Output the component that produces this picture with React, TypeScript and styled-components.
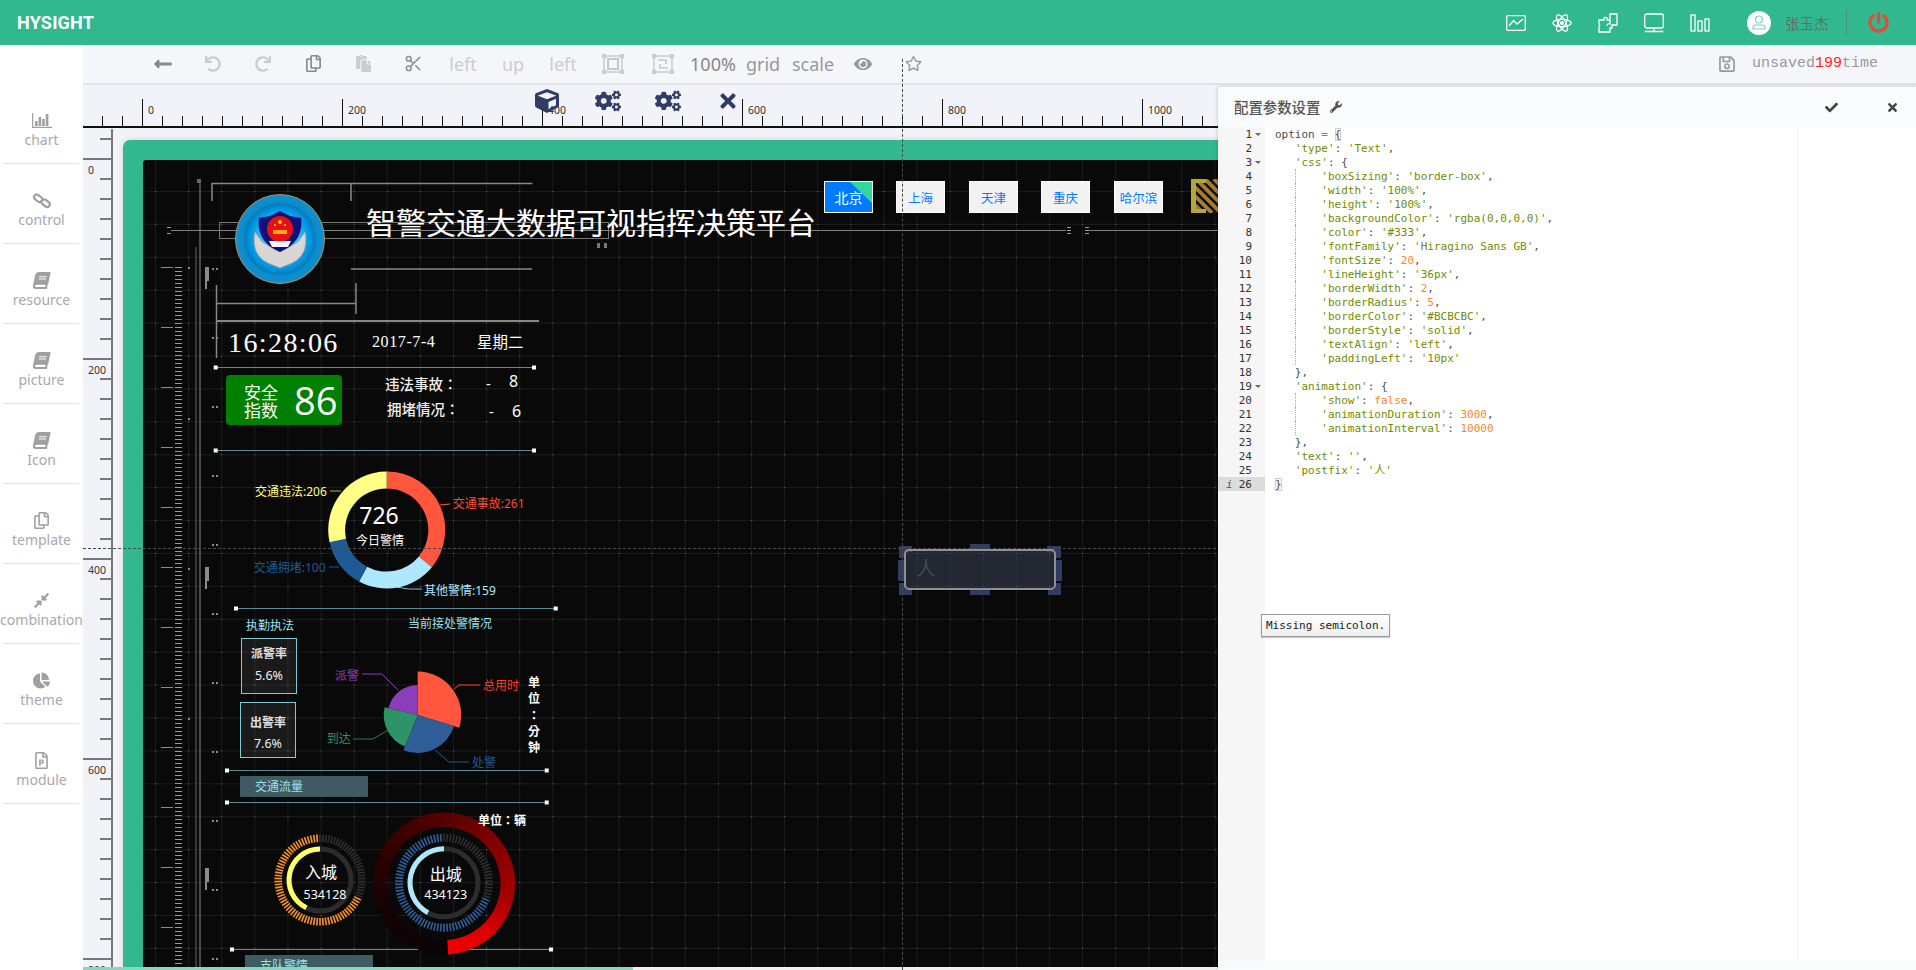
import React from 'react';
import styled, { createGlobalStyle } from 'styled-components';
import {
  FaLongArrowAltLeft, FaUndo, FaRedo, FaRegCopy, FaPaste, FaEye, FaRegStar, FaRegSave, FaCube, FaCogs,
  FaTimes, FaWrench, FaCheck, FaBook, FaCompressAlt, FaChartPie, FaRegFilePowerpoint, FaPowerOff,
} from 'react-icons/fa';
import { Scissors } from 'lucide-react';

const CJK = `"Noto Sans", "Noto Sans CJK SC", sans-serif`;
const TC = `"Noto Sans", "Noto Sans CJK TC", sans-serif`;
const MONO = `"DejaVu Sans Mono", "Noto Sans CJK SC", monospace`;
const GREEN = '#32b88f';

const Global = createGlobalStyle`
  html, body { margin: 0; padding: 0; height: 100%; overflow: hidden; background: #fff; }
  #root { height: 100%; }
  * { box-sizing: border-box; }
`;

const Page = styled.div`
  position: relative; width: 100vw; height: 100vh; overflow: hidden;
  display: grid; grid-template-rows: 45px 1fr; font-family: ${CJK};
`;

/* ---------- header ---------- */
const Header = styled.header`
  background: ${GREEN}; display: flex; align-items: center; padding-left: 17px; color: #fff;
`;
const Brand = styled.div`
  font-family: Roboto, sans-serif; font-weight: 700; font-size: 18px; letter-spacing: 0.2px; flex: 1;
`;
const HeadIcons = styled.div`display: flex; align-items: center; gap: 26px; margin-right: 37px;`;
const HeadIcon = styled.svg`width: 20px; height: 20px; display: block; fill: none; stroke: #fff; stroke-width: 1.3;`;
const User = styled.div`display: flex; align-items: center; width: 99px; gap: 14px; height: 25px;`;
const Avatar = styled.div`
  width: 24px; height: 24px; border-radius: 50%; background: #fff; display: flex; align-items: center; justify-content: center; flex: none;
`;
const UserName = styled.span`font-size: 14.5px; color: #5f6f6a; white-space: nowrap; font-weight: 400;`;
const PowerCell = styled.div`
  height: 25px; width: 70px; border-left: 1px solid rgba(120,90,90,.45); display: flex; align-items: center; padding-left: 21px; color: #e8493a; font-size: 21px;
`;

/* ---------- sidebar ---------- */
const Body = styled.div`display: flex; min-height: 0;`;
const Sidebar = styled.aside`
  width: 83px; flex: none; background: #fff; padding-top: 39px; display: flex; flex-direction: column; align-items: center;
`;
const SideItem = styled.div`
  width: 75px; height: 80px; border-bottom: 1px solid #e2e2e2; flex: none; display: flex; flex-direction: column; align-items: center; padding-top: 27px; color: #a0a0a0;
`;
const SideIcon = styled.div`height: 19px; display: flex; align-items: center; justify-content: center; font-size: 17px;`;
const SideLabel = styled.div`font-size: 14px; line-height: 20px; color: #a9a9a9; white-space: nowrap;`;
const Tilted = styled.span`display: flex; transform: skewX(-12deg);`;

/* ---------- main ---------- */
const Main = styled.main`flex: 1; min-width: 0; display: flex; flex-direction: column; position: relative; background: #f2f3f8;`;
const Toolbar = styled.div`
  height: 40px; flex: none; background: #f5f6fa; border-bottom: 2px solid #dfe4ec; padding-left: 55px; display: flex; align-items: center; padding-bottom: 1px;
`;
const Tool = styled.div<{ $c?: string }>`
  width: 50px; display: flex; justify-content: center; align-items: center; flex: none;
  font-size: 18px; line-height: 24px; color: ${p => p.$c ?? '#999'}; white-space: nowrap;
`;
const SaveState = styled.div`
  margin-left: auto; display: flex; align-items: center; color: #999; font-family: "Liberation Mono", monospace; font-size: 15px; margin-right: 38px;
  svg { font-size: 18px; margin-right: 16px; }
`;
const Red = styled.span`color: #f22;`;
const RulerRow = styled.div`height: 43px; flex: none; position: relative;`;
const ToolOverlay = styled.div<{ $x: number; $size?: number }>`
  position: absolute; top: ${p => 15 - (p.$size ?? 24) / 2 + 1}px; left: ${p => p.$x - 83 - (p.$size ?? 24) / 2}px; color: #313c65; font-size: ${p => p.$size ?? 24}px; line-height: 0;
`;
const RulerSvg = styled.svg`display: block; position: absolute; left: 0; top: 0;
  text { font-family: "Noto Sans", sans-serif; font-size: 10.5px; fill: #333; }
`;
const Stage = styled.div`flex: 1; min-height: 0; display: flex; position: relative;`;
const VRuler = styled.div`width: 40px; flex: none; position: relative;`;
const FrameArea = styled.div`flex: 1; min-width: 0; padding-top: 12px;`;
const Frame = styled.div`
  height: 100%; background: ${GREEN}; padding: 20px 0 0 20px; border-radius: 7px 0 0 0; box-shadow: 0 0 6px rgba(0,0,0,.12);
`;
const Canvas = styled.div`
  position: relative; height: 100%; overflow: hidden; border-radius: 3px 0 0 0; background-color: #090909;
  background-image:
    radial-gradient(circle at 0.5px 0.5px, rgba(120,200,190,.4) 0.8px, transparent 1px),
    linear-gradient(to right, rgba(255,255,255,.07) 1px, transparent 1px),
    linear-gradient(to bottom, rgba(255,255,255,.07) 1px, transparent 1px);
  background-size: 33.12px 32.92px;
  background-position: 12px 31px;
`;
const Scene = styled.svg`position: absolute; left: 0; top: 0; display: block;`;
const HScroll = styled.div`
  position: absolute; left: 0; right: 0; bottom: 0; height: 3px; background: #efefef;
  &::before { content: ''; display: block; width: 550px; height: 3px; background: #83d9bb; }
`;
const GuideV = styled.div`position: absolute; left: 819px; top: 14px; bottom: 0; border-left: 1px dashed #4a4a4a;`;
const GuideH = styled.div`position: absolute; left: 0; right: 0; top: 503px; border-top: 1px dashed #4a4a4a;`;

/* ---------- canvas nodes ---------- */
const Txt = styled.span<{ $x: number; $y: number; $s?: number; $c?: string; $w?: number; $mid?: boolean; $f?: string; $ls?: number }>`
  position: absolute; left: ${p => p.$x - 143}px; top: ${p => p.$y - 160}px;
  transform: translate(${p => (p.$mid ? '-50%' : '0')}, -50%);
  font-size: ${p => p.$s ?? 12}px; color: ${p => p.$c ?? '#fff'}; font-weight: ${p => p.$w ?? 400};
  font-family: ${p => p.$f ?? CJK}; letter-spacing: ${p => p.$ls ?? 0}px; white-space: nowrap; line-height: 1.2;
`;
const ScoreBox = styled.div`
  position: absolute; left: 83px; top: 215px; width: 116px; height: 50px; background: #008000; border-radius: 4px;
  display: flex; align-items: center; padding-left: 18px; color: #fff;
`;
const ScoreLabel = styled.div`font-size: 17px; line-height: 18px; width: 50px; flex: none; margin-top: 3px;`;
const ScoreNum = styled.div`font-size: 38px; line-height: 50px; font-family: "Open Sans", sans-serif;`;
const Card = styled.div<{ $x: number; $y: number; $pad: number; $gap: number }>`
  position: absolute; left: ${p => p.$x - 143}px; top: ${p => p.$y - 160}px; width: 56px; height: 56px;
  border: 1px solid #7fc8d8; background: rgba(255,255,255,.07); color: #fff; display: flex; flex-direction: column; align-items: center;
  padding-top: ${p => p.$pad}px; gap: ${p => p.$gap}px;
`;
const CardTitle = styled.div`font-size: 12px; line-height: 16px; font-weight: 700; color: #e0e0e0;`;
const CardValue = styled.div`font-size: 12.5px; line-height: 16px; color: #eee;`;
const VerticalUnit = styled.div`
  position: absolute; left: 384px; top: 515px; width: 14px; font-size: 12px; line-height: 16.3px; color: #fff; font-weight: 700; text-align: center;
  font-family: ${TC}; line-break: anywhere; word-break: break-all;
`;
const Band = styled.div<{ $x: number; $y: number }>`
  position: absolute; left: ${p => p.$x - 143}px; top: ${p => p.$y - 160}px; width: 128px; height: 21px; background: #3f5a61; color: #9be0ee; font-size: 12px; line-height: 21px; padding-left: 15px;
`;
const CityTab = styled.div<{ $x: number; $on?: boolean }>`
  position: absolute; left: ${p => p.$x - 143}px; top: 21px; width: 49px; height: 32px; display: flex; align-items: center; justify-content: center; overflow: hidden;
  font-size: ${p => (p.$on ? 14 : 12.5)}px; color: ${p => (p.$on ? '#fff' : '#007bff')}; background: ${p => (p.$on ? '#007bff' : '#f2f2f2')}; border: 1px solid #fff;
  &::before {
    content: ''; position: absolute; right: 0; top: 0; width: 22px; height: 21px; background: #30d8a0; clip-path: polygon(0 0, 100% 0, 100% 100%);
    display: ${p => (p.$on ? 'block' : 'none')};
  }
  span { position: relative; }
`;
const Selected = styled.div`
  position: absolute; left: 761px; top: 389px; width: 152px; height: 41px; border: 2px solid #8d9095; border-radius: 5px;
  background: rgba(60,70,90,.5); color: #454850; font-size: 20px; line-height: 36px; padding-left: 10px;
`;

/* ---------- config panel ---------- */
const Panel = styled.section`
  position: absolute; left: 1218px; top: 87px; right: 0; bottom: 0; background: #fafbfd; box-shadow: 0 0 4px rgba(0,0,0,.22);
  display: flex; flex-direction: column; padding-bottom: 9px;
`;
const PanelHead = styled.div`height: 40px; flex: none; display: flex; align-items: center; padding: 0 17px 0 16px; color: #555;`;
const PanelTitle = styled.div`font-size: 14.4px; font-weight: 500; color: #555; margin-right: 10px; margin-top: -2px;`;
const PanelAction = styled.div<{ $push?: boolean }>`
  margin-left: ${p => (p.$push ? 'auto' : '48px')}; font-size: 13px; line-height: 0; color: #444;
`;
const Editor = styled.div`flex: 1; min-height: 0; display: flex; background: #fff; font-family: ${MONO}; font-size: 11px; line-height: 16px;`;
const Gutter = styled.div`width: 47px; flex: none; background: #f6f6f6; color: #333;`;
const GutterCell = styled.div<{ $active?: boolean; $fold?: boolean; $info?: boolean }>`
  height: 14px; text-align: right; padding-right: 13px; position: relative; background: ${p => (p.$active ? '#dcdcdc' : 'transparent')};
  &::after {
    content: ''; display: ${p => (p.$fold ? 'block' : 'none')}; position: absolute; right: 4px; top: 6px;
    border-left: 3px solid transparent; border-right: 3px solid transparent; border-top: 3px solid #666;
  }
  &::before {
    content: '${p => (p.$info ? 'i' : '')}'; position: absolute; left: 8px; top: 0; font-style: italic; color: #555;
  }
`;
const Code = styled.div`flex: 1; position: relative; padding-left: 10px;`;
const PrintMargin = styled.div`position: absolute; left: 532px; top: 0; bottom: 0; border-left: 1px solid #eee;`;
const CodeLine = styled.div<{ $guide?: boolean }>`
  height: 14px; white-space: pre; position: relative; color: #4d4d4c;
  &::before {
    content: ''; display: ${p => (p.$guide ? 'block' : 'none')}; position: absolute; left: 19.5px; top: 0; bottom: 0; border-left: 1px dotted #aaa;
  }
`;
const Tok = styled.span<{ $k: string }>`
  color: ${p => ({ s: '#718c00', n: '#f5871f', o: '#3e999f', p: '#4d4d4c', b: '#4d4d4c' } as Record<string, string>)[p.$k]};
  ${p => (p.$k === 'b' ? 'box-shadow: inset 0 0 0 1px #d0d0d0; background: #f8f8f8;' : '')}
`;
const Hint = styled.div`
  position: absolute; left: 43px; top: 527px; height: 23px; padding: 0 4px; display: flex; align-items: center; font-family: ${MONO}; font-size: 11px; color: #222; white-space: pre;
  border: 1px solid #999; background: linear-gradient(#fff, #eee); box-shadow: 0 1px 1px rgba(0,0,0,.2);
`;

/* ---------- drawing helpers ---------- */
const pt = (cx: number, cy: number, r: number, deg: number) => {
  const a = ((deg - 90) * Math.PI) / 180;
  return [cx + r * Math.cos(a), cy + r * Math.sin(a)];
};
const ring = (cx: number, cy: number, ro: number, ri: number, a0: number, a1: number) => {
  const [x0, y0] = pt(cx, cy, ro, a0), [x1, y1] = pt(cx, cy, ro, a1);
  const [x2, y2] = pt(cx, cy, ri, a1), [x3, y3] = pt(cx, cy, ri, a0);
  const l = a1 - a0 > 180 ? 1 : 0;
  return `M${x0} ${y0}A${ro} ${ro} 0 ${l} 1 ${x1} ${y1}L${x2} ${y2}A${ri} ${ri} 0 ${l} 0 ${x3} ${y3}Z`;
};
const sector = (cx: number, cy: number, r: number, a0: number, a1: number) => {
  const [x0, y0] = pt(cx, cy, r, a0), [x1, y1] = pt(cx, cy, r, a1);
  return `M${cx} ${cy}L${x0} ${y0}A${r} ${r} 0 ${a1 - a0 > 180 ? 1 : 0} 1 ${x1} ${y1}Z`;
};

const Ticks = ({ cx, cy, ro, ri, from, color }: { cx: number; cy: number; ro: number; ri: number; from: number; color: string }) => (
  <g strokeWidth={1.7}>
    {Array.from({ length: 90 }, (_, i) => {
      const a = i * 4;
      const [x0, y0] = pt(cx, cy, ro, a), [x1, y1] = pt(cx, cy, ri, a);
      return <line key={i} x1={x0} y1={y0} x2={x1} y2={y1} stroke={a >= from ? color : '#2e2e2e'} />;
    })}
  </g>
);

const Rail = ({ x1, x2, y }: { x1: number; x2: number; y: number }) => (
  <g>
    <line x1={x1} x2={x2} y1={y} y2={y} stroke="#5e8a96" strokeWidth={1} />
    <rect x={x1 - 2} y={y - 2} width={4} height={4} fill="#fff" />
    <rect x={x2 - 2} y={y - 2} width={4} height={4} fill="#fff" />
  </g>
);

const RedRing = () => {
  const stops = [[0, 240, 0, 0], [0.1, 225, 0, 0], [0.2, 170, 0, 0], [0.35, 130, 0, 0], [0.5, 85, 0, 0], [0.65, 50, 2, 2], [0.8, 22, 3, 3], [1, 10, 4, 4]];
  const color = (t: number) => {
    let i = 0;
    while (i < stops.length - 2 && t > stops[i + 1][0]) i++;
    const [a, b] = [stops[i], stops[i + 1]];
    const k = (t - a[0]) / (b[0] - a[0]);
    return `rgb(${[1, 2, 3].map(j => Math.round(a[j] + (b[j] - a[j]) * k)).join(',')})`;
  };
  return (
    <g>
      {Array.from({ length: 90 }, (_, i) => {
        const a1 = 177 - i * 4;
        const a0 = a1 - 4.3;
        return <path key={i} d={ring(444, 883.5, 71, 56.5, a0, a1)} fill={color(i / 89)} />;
      })}
    </g>
  );
};

const Logo = () => (
  <g>
    <defs>
      <radialGradient id="lg1"><stop offset="0.55" stopColor="#0a7fc4" /><stop offset="1" stopColor="#0d92cf" /></radialGradient>
      <radialGradient id="lg2"><stop offset="0.5" stopColor="#2bc0ff" /><stop offset="0.85" stopColor="#0093df" /><stop offset="1" stopColor="#0578b8" /></radialGradient>
    </defs>
    <circle cx={280} cy={239} r={44.5} fill="url(#lg1)" stroke="#b98a5e" strokeWidth={1} />
    <circle cx={280} cy={239} r={36} fill="url(#lg2)" />
    <path d="M255 232C252 247 257 258 268 263L280 268L292 263C303 258 308 247 305 232L298 242L280 252L262 242Z" fill="#d9d6d4" stroke="#c09a88" strokeWidth={0.6} />
    <path d="M280 211L290 216L301 218C303 232 297 245 280 252C263 245 257 232 259 218L270 216Z" fill="#10107a" />
    <circle cx={280} cy={229} r={13} fill="#e81010" />
    <path d="M269 241H291L288 247H272Z" fill="#f2f2f2" />
    <circle cx={280} cy={222} r={2} fill="#ffd21e" />
    <circle cx={275} cy={225} r={1} fill="#ffd21e" /><circle cx={285} cy={225} r={1} fill="#ffd21e" />
    <rect x={273} y={230} width={14} height={4} fill="#ffd21e" opacity={0.8} />
  </g>
);

const range = (from: number, to: number, step: number) => {
  const r: number[] = [];
  for (let v = from; v <= to; v += step) r.push(v);
  return r;
};

const Decor = () => (
  <g stroke="#888" fill="none">
    <line x1={200} x2={200} y1={181} y2={970} strokeWidth={1} />
    <line x1={196} x2={196} y1={247} y2={970} stroke="#666" strokeWidth={1} />
    <rect x={197} y={179} width={4} height={4} fill="#666" stroke="none" />
    <path d="M212 201V183.5H532.5M351 183.5V201M351 269H532M216.5 285V358M356 283V314M216.5 303.5H356" strokeWidth={1.5} />
    <line x1={216} x2={539} y1={321} y2={321} strokeWidth={2} />
    <rect x={219.5} y={222.5} width={389} height={16} stroke="#777" strokeWidth={1} />
    <line x1={171} x2={1066} y1={230.5} y2={230.5} stroke="#808080" strokeWidth={1} />
    <line x1={1089} x2={1218} y1={230.5} y2={230.5} stroke="#808080" strokeWidth={1} />
    <path d="M167 227.5H171M167 233.5H171M1067 227.5H1071M1067 233.5H1071M1085 227.5H1089M1085 233.5H1089M1067 230.5H1071M1085 230.5H1089" stroke="#999" strokeWidth={1} />
    <rect x={597} y={243} width={3} height={5} fill="#777" stroke="none" />
    <rect x={604} y={243} width={3} height={5} fill="#777" stroke="none" />
    {range(267, 970, 4).map(y => <line key={y} x1={175} x2={182} y1={y + 0.5} y2={y + 0.5} stroke="#9a9a9a" strokeWidth={1} />)}
    {range(267, 970, 60).map(y => <line key={y} x1={161} x2={173} y1={y + 0.5} y2={y + 0.5} stroke="#8a8a8a" strokeWidth={1} />)}
    {[267, 418, 568, 718].map(y => <rect key={y} x={188} y={y} width={2} height={2} fill="#888" stroke="none" />)}
    {[267, 567, 868].map(y => (
      <path key={y} d={`M205 ${y}h4v14h-2v8h-2Z`} fill="#8a8a8a" stroke="none" />
    ))}
    {range(268, 970, 69).map(y => (
      <g key={y} fill="#8a8a8a" stroke="none"><rect x={212} y={y} width={2} height={2} /><rect x={216} y={y} width={2} height={2} /></g>
    ))}
  </g>
);

const Charts = () => (
  <g>
    <path d={ring(386.7, 530, 58.5, 41.6, 0, 129.4)} fill="#ff563d" />
    <path d={ring(386.7, 530, 58.5, 41.6, 129.4, 208.2)} fill="#aee8ff" />
    <path d={ring(386.7, 530, 58.5, 41.6, 208.2, 257.8)} fill="#1e5a96" />
    <path d={ring(386.7, 530, 58.5, 41.6, 257.8, 360)} fill="#ffff85" />
    <g fill="none" strokeWidth={1}>
      <path d="M330 491H341" stroke="#ffff85" opacity={0.7} />
      <path d="M440 505L450 504" stroke="#ff563d" />
      <path d="M329 567H339" stroke="#1e5a96" />
      <path d="M397 587L408 589H422" stroke="#aee8ff" opacity={0.8} />
    </g>
    <path d={sector(417.7, 715, 43.5, 0, 107)} fill="#ff563d" />
    <path d={sector(417.7, 715, 38, 107, 202)} fill="#2f5d97" />
    <path d={sector(417.7, 715, 34, 202, 283)} fill="#2f9368" />
    <path d={sector(417.7, 715, 30, 283, 360)} fill="#8a3fb8" />
    <g fill="none" strokeWidth={1}>
      <path d="M362 674H382L398 690" stroke="#8a3fb8" />
      <path d="M454 689L459 685H480" stroke="#a8331f" strokeWidth={1.5} />
      <path d="M353 739H373L388 730" stroke="#2a7f59" />
      <path d="M435 750L449 762H469" stroke="#1e5a96" />
    </g>
    <Ticks cx={320} cy={880} ro={45.6} ri={38} from={116} color="#f28e2b" />
    <circle cx={320} cy={880} r={31} fill="none" stroke="#2c2c2c" strokeWidth={5} />
    <path d={ring(320, 880, 33.5, 28.5, 206, 360)} fill="#ffff6a" />
    <RedRing />
    <Ticks cx={444} cy={882.7} ro={49} ri={41} from={112} color="#2f5d97" />
    <circle cx={444} cy={882.7} r={34} fill="none" stroke="#2c2c2c" strokeWidth={5} />
    <path d={ring(444, 882.7, 36.5, 31.5, 208, 360)} fill="#aee8ff" />
  </g>
);

const Handles = () => (
  <g fill="#2f3d60">
    <rect x={970} y={544} width={20} height={6} />
    <rect x={970} y={588} width={20} height={7} />
    <rect x={898} y={560} width={6} height={21} />
    <rect x={1056} y={560} width={6} height={21} />
    <path d="M899 546H912V552H905V558H899Z" />
    <path d="M1047 546H1061V558H1055V552H1047Z" />
    <path d="M899 583H905V589H912V595H899Z" />
    <path d="M1055 583H1061V595H1048V589H1055Z" />
  </g>
);

const Stripes = () => (
  <g>
    <defs><clipPath id="stripeClip"><rect x={1196} y={179} width={24} height={34} /></clipPath></defs>
    <g stroke="#a67b32" strokeWidth={4} clipPath="url(#stripeClip)">
      {range(-36, 27, 9).map(d => <line key={d} x1={1196 + d} y1={179} x2={1196 + d + 34} y2={213} />)}
    </g>
    <path d="M1191 179H1206V183H1196V209H1206V213H1191Z" fill="#b0a83a" />
  </g>
);

/* ---------- code ---------- */
type T = [string, string];
const s = (t: string): T => ['s', t];
const n = (t: string): T => ['n', t];
const p = (t: string): T => ['p', t];
const prop = (k: string, v: T[], tail = ','): T[] => [p('       '), s(`'${k}'`), p(': '), ...v, p(tail)];
const CODE: { t: T[]; g?: boolean; f?: boolean }[] = [
  { t: [p('option '), ['o', '='], p(' '), ['b', '{']], f: true },
  { t: [p('   '), s("'type'"), p(': '), s("'Text'"), p(',')] },
  { t: [p('   '), s("'css'"), p(': {')], f: true },
  { t: prop('boxSizing', [s("'border-box'")]), g: true },
  { t: prop('width', [s("'100%'")]), g: true },
  { t: prop('height', [s("'100%'")]), g: true },
  { t: prop('backgroundColor', [s("'rgba(0,0,0,0)'")]), g: true },
  { t: prop('color', [s("'#333'")]), g: true },
  { t: prop('fontFamily', [s("'Hiragino Sans GB'")]), g: true },
  { t: prop('fontSize', [n('20')]), g: true },
  { t: prop('lineHeight', [s("'36px'")]), g: true },
  { t: prop('borderWidth', [n('2')]), g: true },
  { t: prop('borderRadius', [n('5')]), g: true },
  { t: prop('borderColor', [s("'#BCBCBC'")]), g: true },
  { t: prop('borderStyle', [s("'solid'")]), g: true },
  { t: prop('textAlign', [s("'left'")]), g: true },
  { t: prop('paddingLeft', [s("'10px'")], ''), g: true },
  { t: [p('   },')] },
  { t: [p('   '), s("'animation'"), p(': {')], f: true },
  { t: prop('show', [n('false')]), g: true },
  { t: prop('animationDuration', [n('3000')]), g: true },
  { t: prop('animationInterval', [n('10000')], ''), g: true },
  { t: [p('   },')] },
  { t: [p('   '), s("'text'"), p(': '), s("''"), p(',')] },
  { t: [p('   '), s("'postfix'"), p(': '), s("'人'")] },
  { t: [['b', '}']] },
];

/* ---------- custom icons ---------- */
const BarAxes = () => (
  <svg width="20" height="15" viewBox="0 0 20 15" fill="#a0a0a0">
    <path d="M0 0h1.2v13.8H20V15H0Z" /><rect x="3" y="8" width="2.6" height="5" /><rect x="6.6" y="4" width="2.6" height="9" />
    <rect x="10.2" y="6" width="2.6" height="7" /><rect x="13.8" y="1" width="2.6" height="12" />
  </svg>
);
const ChainIcon = () => (
  <svg width="18" height="17" viewBox="0 0 18 17" fill="none" stroke="#a0a0a0" strokeWidth="2.2">
    <rect x="0.8" y="3.4" width="9" height="5.4" rx="2.7" transform="rotate(38 5 6)" />
    <rect x="8.2" y="8.4" width="9" height="5.4" rx="2.7" transform="rotate(38 12.5 11)" />
  </svg>
);
const GroupIcon = ({ inner }: { inner: boolean }) => (
  <svg width="22" height="20" viewBox="0 0 22 20" fill="none" stroke="#c8c8c8" strokeWidth="1.4">
    <rect x="2" y="2" width="18" height="16" />
    {[[0, 0], [18, 0], [0, 16], [18, 16]].map(([x, y]) => <rect key={`${x}${y}`} x={x + 0.5} y={y + 0.5} width="3" height="3" fill="#ddd" />)}
    {inner ? <rect x="6" y="5" width="10" height="10" strokeWidth="2" /> : <path d="M6 6h8v4M16 14H8v-4" strokeWidth="1.6" />}
  </svg>
);

const App = () => {
  const side: [string, React.ReactNode][] = [
    ['chart', <BarAxes />], ['control', <ChainIcon />],
    ['resource', <Tilted><FaBook /></Tilted>], ['picture', <Tilted><FaBook /></Tilted>], ['Icon', <Tilted><FaBook /></Tilted>],
    ['template', <FaRegCopy />], ['combination', <FaCompressAlt />], ['theme', <FaChartPie />], ['module', <FaRegFilePowerpoint />],
  ];
  const hTicks = range(102, 1218, 20);
  const vTicks = range(139, 970, 20);
  return (
    <Page>
      <Global />
      <Header>
        <Brand>HYSIGHT</Brand>
        <HeadIcons>
          <HeadIcon viewBox="0 0 20 20"><rect x="0.7" y="2.7" width="18.6" height="14.6" rx="1" /><path d="M3 13L7.5 7.5L11 11L17 6" /></HeadIcon>
          <HeadIcon viewBox="0 0 20 20">
            <ellipse cx="10" cy="10" rx="9.2" ry="3.6" />
            <ellipse cx="10" cy="10" rx="9.2" ry="3.6" transform="rotate(60 10 10)" />
            <ellipse cx="10" cy="10" rx="9.2" ry="3.6" transform="rotate(120 10 10)" />
            <circle cx="10" cy="10" r="1.4" fill="#fff" />
          </HeadIcon>
          <HeadIcon viewBox="0 0 20 20"><path d="M1 7H6V5A2 2 0 0 1 9 5V7H12V1H19V12H14V15H12V19H1V14A2 2 0 0 0 1 11Z" /><path d="M12 7V11A2 2 0 0 0 9 13" /></HeadIcon>
          <HeadIcon viewBox="0 0 20 20"><rect x="0.7" y="1" width="18.6" height="14" rx="2" /><path d="M10 15V18.5M0.7 18.5H19.3" /></HeadIcon>
          <HeadIcon viewBox="0 0 20 20"><rect x="1" y="2" width="4" height="16" /><rect x="8" y="8" width="4" height="10" /><rect x="15" y="6" width="4" height="12" /></HeadIcon>
        </HeadIcons>
        <User>
          <Avatar>
            <svg width="14" height="15" viewBox="0 0 14 15" fill="none" stroke="#7ed3b6" strokeWidth="1.2"><circle cx="7" cy="4.5" r="3.5" /><path d="M1 14V12.5A3 3 0 0 1 4 10H10A3 3 0 0 1 13 12.5V14Z" /></svg>
          </Avatar>
          <UserName>张玉杰</UserName>
        </User>
        <PowerCell><FaPowerOff /></PowerCell>
      </Header>
      <Body>
        <Sidebar>
          {side.map(([label, icon]) => (
            <SideItem key={label}>
              <SideIcon>{icon}</SideIcon>
              <SideLabel>{label}</SideLabel>
            </SideItem>
          ))}
        </Sidebar>
        <Main>
          <Toolbar>
            <Tool $c="#888"><FaLongArrowAltLeft size={20} /></Tool>
            <Tool $c="#ccc"><FaUndo size={16} /></Tool>
            <Tool $c="#ccc"><FaRedo size={16} /></Tool>
            <Tool $c="#888"><FaRegCopy size={17} /></Tool>
            <Tool $c="#ccc"><FaPaste size={17} /></Tool>
            <Tool $c="#888"><Scissors size={19} strokeWidth={1.8} /></Tool>
            <Tool $c="#ccc">left</Tool>
            <Tool $c="#ccc">up</Tool>
            <Tool $c="#ccc">left</Tool>
            <Tool><GroupIcon inner /></Tool>
            <Tool><GroupIcon inner={false} /></Tool>
            <Tool $c="#888">100%</Tool>
            <Tool>grid</Tool>
            <Tool>scale</Tool>
            <Tool><FaEye size={18} /></Tool>
            <Tool><FaRegStar size={17} /></Tool>
            <SaveState><FaRegSave />unsaved<Red>199</Red>time</SaveState>
          </Toolbar>
          <RulerRow>
            <RulerSvg width={1833} height={43}>
              {hTicks.map(x => {
                const major = (x - 142) % 200 === 0;
                return <line key={x} x1={x - 82.5} x2={x - 82.5} y1={major ? 14 : 31} y2={42} stroke="#111" strokeWidth={1} />;
              })}
              {range(142, 1218, 200).map(x => <text key={x} x={x - 83 + 6} y={29}>{x - 142}</text>)}
              <line x1={0} x2={1833} y1={42} y2={42} stroke="#111" strokeWidth={2} />
            </RulerSvg>
            <ToolOverlay $x={547}><FaCube /></ToolOverlay>
            <ToolOverlay $x={608} $size={26}><FaCogs /></ToolOverlay>
            <ToolOverlay $x={668} $size={26}><FaCogs /></ToolOverlay>
            <ToolOverlay $x={728} $size={22}><FaTimes /></ToolOverlay>
          </RulerRow>
          <Stage>
            <VRuler>
              <RulerSvg width={40} height={842}>
                <line x1={29} x2={29} y1={1} y2={842} stroke="#777" strokeWidth={2} />
                {vTicks.map(y => {
                  const major = (y - 159) % 200 === 0;
                  return <line key={y} x1={major ? 0 : 17} x2={29} y1={y - 128} y2={y - 128} stroke="#777" strokeWidth={2} />;
                })}
                {range(159, 970, 200).map(y => <text key={y} x={5} y={y - 128 + 15}>{y - 159}</text>)}
              </RulerSvg>
            </VRuler>
            <FrameArea>
              <Frame>
                <Canvas>
                  <Scene width={1075} height={810} viewBox="143 160 1075 810">
                    <Decor />
                    <Logo />
                    <Rail x1={215.7} x2={534} y={367.5} />
                    <Rail x1={215.7} x2={534} y={450.5} />
                    <Rail x1={236} x2={555.7} y={608.5} />
                    <Rail x1={227} x2={546.7} y={770.5} />
                    <Rail x1={227} x2={546.7} y={802.5} />
                    <Rail x1={232} x2={551} y={949.5} />
                    <Charts />
                    <Handles />
                    <Stripes />
                  </Scene>
                  <Txt $x={366} $y={221} $s={30} $f={`"Noto Sans CJK SC", sans-serif`}>智警交通大数据可视指挥决策平台</Txt>
                  <CityTab $x={824} $on><span>北京</span></CityTab>
                  <CityTab $x={896}><span>上海</span></CityTab>
                  <CityTab $x={969}><span>天津</span></CityTab>
                  <CityTab $x={1041}><span>重庆</span></CityTab>
                  <CityTab $x={1114}><span>哈尔滨</span></CityTab>

                  <Txt $x={228} $y={343} $s={28} $f={`"Liberation Serif", serif`} $ls={1.4}>16:28:06</Txt>
                  <Txt $x={372} $y={342} $s={16} $f={`"Liberation Serif", serif`} $ls={0.6}>2017-7-4</Txt>
                  <Txt $x={477} $y={340.5} $s={15.5} $f={`"Noto Sans CJK SC", sans-serif`}>星期二</Txt>

                  <ScoreBox>
                    <ScoreLabel>安全<br />指数</ScoreLabel>
                    <ScoreNum>86</ScoreNum>
                  </ScoreBox>
                  <Txt $x={385} $y={385} $s={14.5} $w={500} $c="#eee" $f={TC}>违法事故：</Txt>
                  <Txt $x={486} $y={383} $s={15}>-</Txt>
                  <Txt $x={509} $y={382} $s={16}>8</Txt>
                  <Txt $x={387} $y={410} $s={14.5} $w={500} $c="#eee" $f={TC}>拥堵情况：</Txt>
                  <Txt $x={489} $y={411} $s={15}>-</Txt>
                  <Txt $x={512} $y={412} $s={16}>6</Txt>

                  <Txt $x={379} $y={516} $s={23} $mid>726</Txt>
                  <Txt $x={380} $y={541} $s={12} $mid>今日警情</Txt>
                  <Txt $x={255} $y={492} $c="#ffff85">交通违法:206</Txt>
                  <Txt $x={452.7} $y={504} $c="#ff4a35">交通事故:261</Txt>
                  <Txt $x={253.7} $y={567.7} $c="#1e5a96">交通拥堵:100</Txt>
                  <Txt $x={424} $y={590.5} $c="#aee8ff">其他警情:159</Txt>

                  <Txt $x={246} $y={625.5} $c="#9be0ee">执勤执法</Txt>
                  <Txt $x={408} $y={624} $c="#9be0ee">当前接处警情况</Txt>
                  <Card $x={241} $y={638} $pad={7} $gap={6}><CardTitle>派警率</CardTitle><CardValue>5.6%</CardValue></Card>
                  <Card $x={240} $y={702} $pad={12} $gap={5}><CardTitle>出警率</CardTitle><CardValue>7.6%</CardValue></Card>

                  <Txt $x={335} $y={675.5} $c="#8a3fb8">派警</Txt>
                  <Txt $x={483} $y={685.5} $c="#ff3b26">总用时</Txt>
                  <Txt $x={326.7} $y={739} $c="#2f9368">到达</Txt>
                  <Txt $x={472} $y={762.5} $c="#1e5a96">处警</Txt>
                  <VerticalUnit>单位：分钟</VerticalUnit>

                  <Band $x={240} $y={776}>交通流量</Band>
                  <Txt $x={478} $y={821} $w={700} $f={TC}>单位：辆</Txt>
                  <Txt $x={321} $y={873} $s={16} $mid>入城</Txt>
                  <Txt $x={325} $y={894} $s={12.5} $mid>534128</Txt>
                  <Txt $x={445.7} $y={875} $s={16} $mid>出城</Txt>
                  <Txt $x={445.7} $y={894} $s={12.5} $mid>434123</Txt>
                  <Band $x={245} $y={955}>支队警情</Band>

                  <Selected>人</Selected>
                </Canvas>
              </Frame>
            </FrameArea>
          </Stage>
          <HScroll />
          <GuideV />
          <GuideH />
        </Main>
      </Body>
      <Panel>
        <PanelHead>
          <PanelTitle>配置参数设置</PanelTitle>
          <FaWrench size={12} />
          <PanelAction $push><FaCheck /></PanelAction>
          <PanelAction><FaTimes /></PanelAction>
        </PanelHead>
        <Editor>
          <Gutter>
            {CODE.map((l, i) => (
              <GutterCell key={i} $fold={l.f} $active={i === 25} $info={i === 25}>{i + 1}</GutterCell>
            ))}
          </Gutter>
          <Code>
            <PrintMargin />
            {CODE.map((l, i) => (
              <CodeLine key={i} $guide={l.g}>
                {l.t.map(([k, t], j) => <Tok key={j} $k={k}>{t}</Tok>)}
              </CodeLine>
            ))}
          </Code>
        </Editor>
        <Hint>Missing semicolon.</Hint>
      </Panel>
    </Page>
  );
};

export default App;
